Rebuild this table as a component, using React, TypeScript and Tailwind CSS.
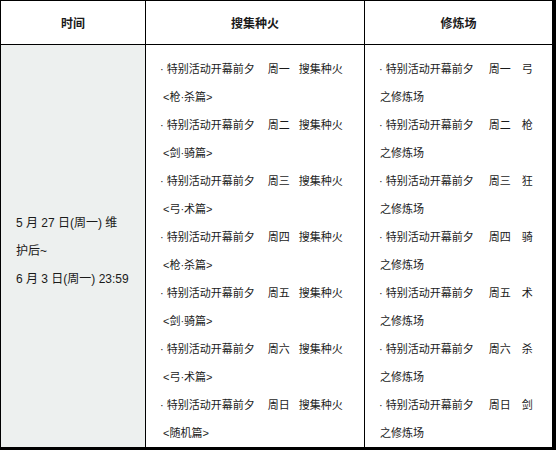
import React from "react";

const days = ["周一", "周二", "周三", "周四", "周五", "周六", "周日"];
const fire = ["<枪·杀篇>", "<剑·骑篇>", "<弓·术篇>", "<枪·杀篇>", "<剑·骑篇>", "<弓·术篇>", "<随机篇>"];
const training = ["弓", "枪", "狂", "骑", "术", "杀", "剑"];

const font = { fontFamily: '"Liberation Sans", "Noto Sans CJK SC", sans-serif' };

export default function App() {
  return (
    <div
      className="w-[556px] h-[450px] bg-white border-l border-t border-black border-r-4 border-b-[3px] text-[#1a1a1a] overflow-hidden"
      style={font}
    >
      <div className="grid grid-cols-[144px_219px_188px]">
        {/* header */}
        <div className="h-[44px] border-b border-black flex items-center justify-center pt-[2px] text-[12px] font-bold">
          时间
        </div>
        <div className="h-[44px] border-b border-l border-black flex items-center justify-center pt-[2px] text-[12px] font-bold">
          搜集种火
        </div>
        <div className="h-[44px] border-b border-l border-black flex items-center justify-center pt-[2px] text-[12px] font-bold">
          修炼场
        </div>

        {/* body */}
        <div className="h-[402px] bg-[#edf0ef] flex flex-col justify-center pt-[10px] pl-[15px] text-[12px] leading-[28px]">
          <div>5 月 27 日(周一) 维</div>
          <div>护后~</div>
          <div>6 月 3 日(周一) 23:59</div>
        </div>

        <div className="h-[402px] border-l border-black pt-[10px] pl-[14px] text-[11px] leading-[28px] overflow-hidden">
          {days.map((d, i) => (
            <React.Fragment key={d}>
              <div className="whitespace-nowrap">
                <span className="pr-[3px]">·</span>特别活动开幕前夕<span className="inline-block w-[13px]" />
                {d}
                <span className="inline-block w-[9px]" />
                搜集种火
              </div>
              <div className="pl-[3px]">{fire[i]}</div>
            </React.Fragment>
          ))}
        </div>

        <div className="h-[402px] border-l border-black pt-[10px] pl-[14px] text-[11px] leading-[28px] overflow-hidden">
          {days.map((d, i) => (
            <React.Fragment key={d}>
              <div className="whitespace-nowrap">
                <span className="pr-[3px]">·</span>特别活动开幕前夕<span className="inline-block w-[15px]" />
                {d}
                <span className="inline-block w-[11px]" />
                {training[i]}
              </div>
              <div className="pl-[1px]">之修炼场</div>
            </React.Fragment>
          ))}
        </div>
      </div>
    </div>
  );
}
